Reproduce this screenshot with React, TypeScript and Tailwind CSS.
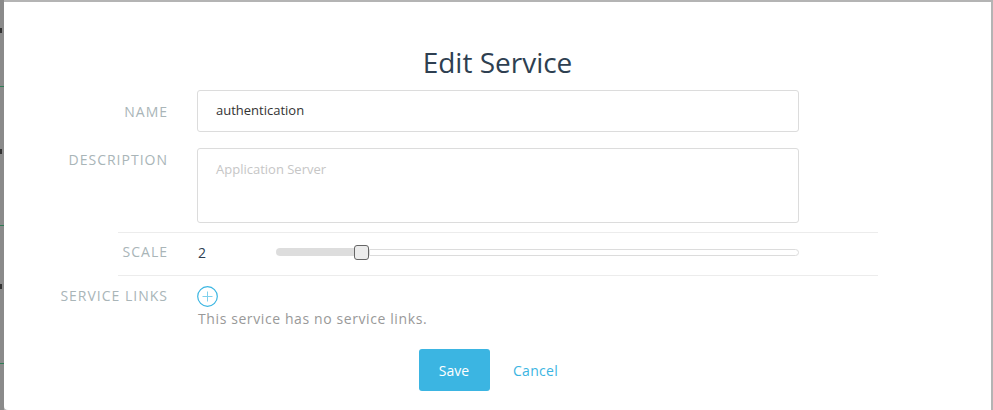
import React from "react";

const font = { fontFamily: '"Open Sans", "Noto Sans", sans-serif' };

function PlusCircle() {
  return (
    <svg width="21" height="21" viewBox="0 0 21 21" fill="none">
      <circle cx="10.5" cy="10.5" r="9.8" stroke="#3cb6e2" strokeWidth="1.2" />
      <path d="M10.5 5.5v10M5.5 10.5h10" stroke="#7fd0ec" strokeWidth="1" />
    </svg>
  );
}

function Label({ children, className = "" }: { children: React.ReactNode; className?: string }) {
  return (
    <div
      className={`w-[136px] shrink-0 text-right text-[14px] leading-[20px] tracking-[1px] uppercase text-[#a9b5b8] ${className}`}
    >
      {children}
    </div>
  );
}

export default function App() {
  return (
    <div className="w-[993px] h-[410px] flex overflow-hidden bg-[#b4b4b4]" style={font}>
      <div className="w-[4px] h-full bg-[#8a8a8a] flex flex-col shrink-0">
        <div className="h-[28px]" />
        <div className="h-[5px] w-[2px] bg-[#333]" />
        <div className="h-[53px]" />
        <div className="h-[1px] bg-[#2f7d55]" />
        <div className="h-[62px]" />
        <div className="h-[5px] w-[2px] bg-[#333]" />
        <div className="h-[71px]" />
        <div className="h-[1px] bg-[#2f7d55]" />
        <div className="h-[58px]" />
        <div className="h-[5px] w-[2px] bg-[#333]" />
        <div className="h-[74px]" />
        <div className="h-[1px] bg-[#2f7d55]" />
      </div>
      <div className="flex-1 flex flex-col">
        <div className="h-[2px] bg-[#b4b4b4] shrink-0" />
        <div className="flex flex-1">
          <div className="flex-1 bg-white rounded-bl-[4px] flex flex-col">
            <div className="pt-[41px] text-center text-[28px] leading-[38px] text-[#2e3f51]">Edit Service</div>

            <div className="mt-[9px] flex items-center pl-[28px]">
              <Label className="pt-[2px]">Name</Label>
              <div className="ml-[29px] w-[602px] h-[42px] border border-[#dcdcdc] rounded-[3px] flex items-center px-[18px] text-[13px] text-[#333]">
                authentication
              </div>
            </div>

            <div className="mt-[16px] flex items-start pl-[28px]">
              <Label className="pt-[2px]">Description</Label>
              <div className="ml-[29px] w-[602px] h-[75px] border border-[#dcdcdc] rounded-[3px] px-[18px] pt-[10px] text-[13px] leading-[20px] text-[#c6c6c6]">
                Application Server
              </div>
            </div>

            <div className="mt-[9px] ml-[114px] w-[760px] h-[1px] bg-[#ececec]" />

            <div className="h-[42px] flex items-center pl-[28px] pb-[4px]">
              <Label>Scale</Label>
              <div className="ml-[30px] w-[78px] text-[14px] text-[#2e3f51]">2</div>
              <div className="w-[523px] h-[16px] flex items-center">
                <div className="w-[78px] h-[8px] bg-[#dddddd] rounded-l-full" />
                <div className="w-[15px] h-[15px] bg-[#ececec] border border-[#666] rounded-[3px] shrink-0" />
                <div className="flex-1 h-[7px] border border-[#dcdcdc] rounded-r-full bg-white" />
              </div>
            </div>

            <div className="ml-[114px] w-[760px] h-[1px] bg-[#ececec]" />

            <div className="mt-[10px] flex items-start pl-[28px]">
              <Label>Service Links</Label>
              <div className="ml-[29px] flex flex-col">
                <PlusCircle />
                <div className="mt-[2px] text-[14px] leading-[20px] tracking-[0.6px] text-[#999] pl-[1px]">
                  This service has no service links.
                </div>
              </div>
            </div>

            <div className="mt-[20px] flex justify-center pl-[5px]">
              <div className="w-[71px] h-[42px] rounded-[3px] bg-[#3bb5e2] text-white text-[14px] flex items-center justify-center">
                Save
              </div>
              <div className="w-[92px] h-[42px] text-[#3bb5e2] text-[14px] tracking-[0.3px] flex items-center justify-center">Cancel</div>
            </div>
          </div>
          <div className="w-[2px] bg-[#b4b4b4] shrink-0" />
        </div>
      </div>
    </div>
  );
}
